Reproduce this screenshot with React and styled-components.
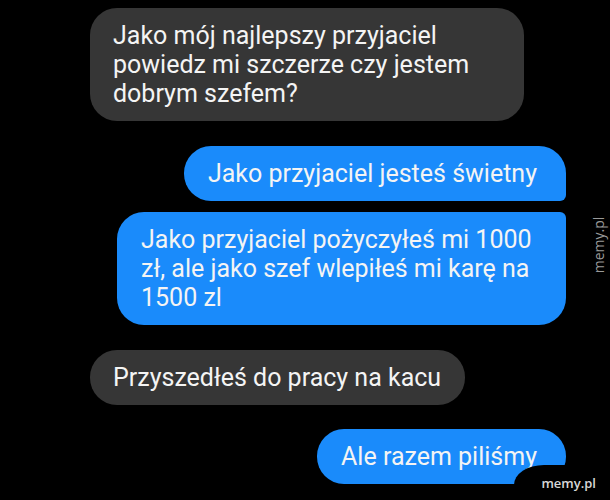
import styled, { createGlobalStyle } from 'styled-components';

const GlobalStyle = createGlobalStyle`
  html, body {
    margin: 0;
    padding: 0;
    background: #000;
  }
`;

const messages = [
  {
    id: 1,
    mine: false,
    text: 'Jako mój najlepszy przyjaciel powiedz mi szczerze czy jestem dobrym szefem?',
    gap: 0,
  },
  { id: 2, mine: true, text: 'Jako przyjaciel jesteś świetny', gap: 25, tail: 'bottom' },
  {
    id: 3,
    mine: true,
    text: 'Jako przyjaciel pożyczyłeś mi 1000 zł, ale jako szef wlepiłeś mi karę na 1500 zl',
    gap: 11,
    tail: 'top',
  },
  { id: 4, mine: false, text: 'Przyszedłeś do pracy na kacu', gap: 25 },
  { id: 5, mine: true, text: 'Ale razem piliśmy', gap: 24 },
];

const App = () => {
  return (
    <>
      <GlobalStyle />
      <Screen>
        <Thread>
          {messages.map((m) => (
            <Row key={m.id} $mine={m.mine} $gap={m.gap}>
              <Bubble $mine={m.mine} $tail={m.tail}>
                {m.text}
              </Bubble>
            </Row>
          ))}
        </Thread>
        <SideMark>memy.pl</SideMark>
        <CornerMark>
          <span>memy.pl</span>
        </CornerMark>
      </Screen>
    </>
  );
};

const Screen = styled.div`
  position: relative;
  width: 610px;
  height: 500px;
  overflow: hidden;
  background: #000;
  font-family: Roboto, 'Liberation Sans', sans-serif;
`;

const Thread = styled.div`
  display: flex;
  flex-direction: column;
  padding-top: 8px;
`;

const Row = styled.div`
  display: flex;
  justify-content: ${(p) => (p.$mine ? 'flex-end' : 'flex-start')};
  padding: ${(p) => (p.$mine ? '0 44px 0 0' : '0 0 0 90px')};
  margin-top: ${(p) => p.$gap}px;
`;

const Bubble = styled.div`
  box-sizing: border-box;
  width: fit-content;
  max-width: ${(p) => (p.$mine ? '449px' : '434px')};
  padding: 13px ${(p) => (p.$mine ? '29px' : '24px')} 13px
    ${(p) => (p.$mine ? '24px' : '23px')};
  border-radius: 27px;
  ${(p) => p.$tail === 'bottom' && 'border-bottom-right-radius: 6px;'}
  ${(p) => p.$tail === 'top' && 'border-top-right-radius: 6px;'}
  background: ${(p) => (p.$mine ? '#1a8bfb' : '#363636')};
  color: #f4f4f4;
  font-size: 25px;
  line-height: 29px;
`;

const SideMark = styled.div`
  position: absolute;
  left: 598px;
  top: 245px;
  transform: translate(-50%, -50%) rotate(-90deg);
  color: #9a9a9a;
  font-family: 'Open Sans', 'Liberation Sans', sans-serif;
  font-size: 14px;
  white-space: nowrap;
`;

const CornerMark = styled.div`
  position: absolute;
  left: 514px;
  top: 465px;
  right: 0;
  bottom: 0;
  background: #000;
  border-top-left-radius: 30px 20px;
  display: flex;
  justify-content: flex-end;
  padding: 10px 14px 0 0;

  span {
    color: #d8d8d8;
    font-family: 'Open Sans', 'Liberation Sans', sans-serif;
    font-weight: 600;
    font-size: 13px;
    line-height: 16px;
  }
`;

export default App;
